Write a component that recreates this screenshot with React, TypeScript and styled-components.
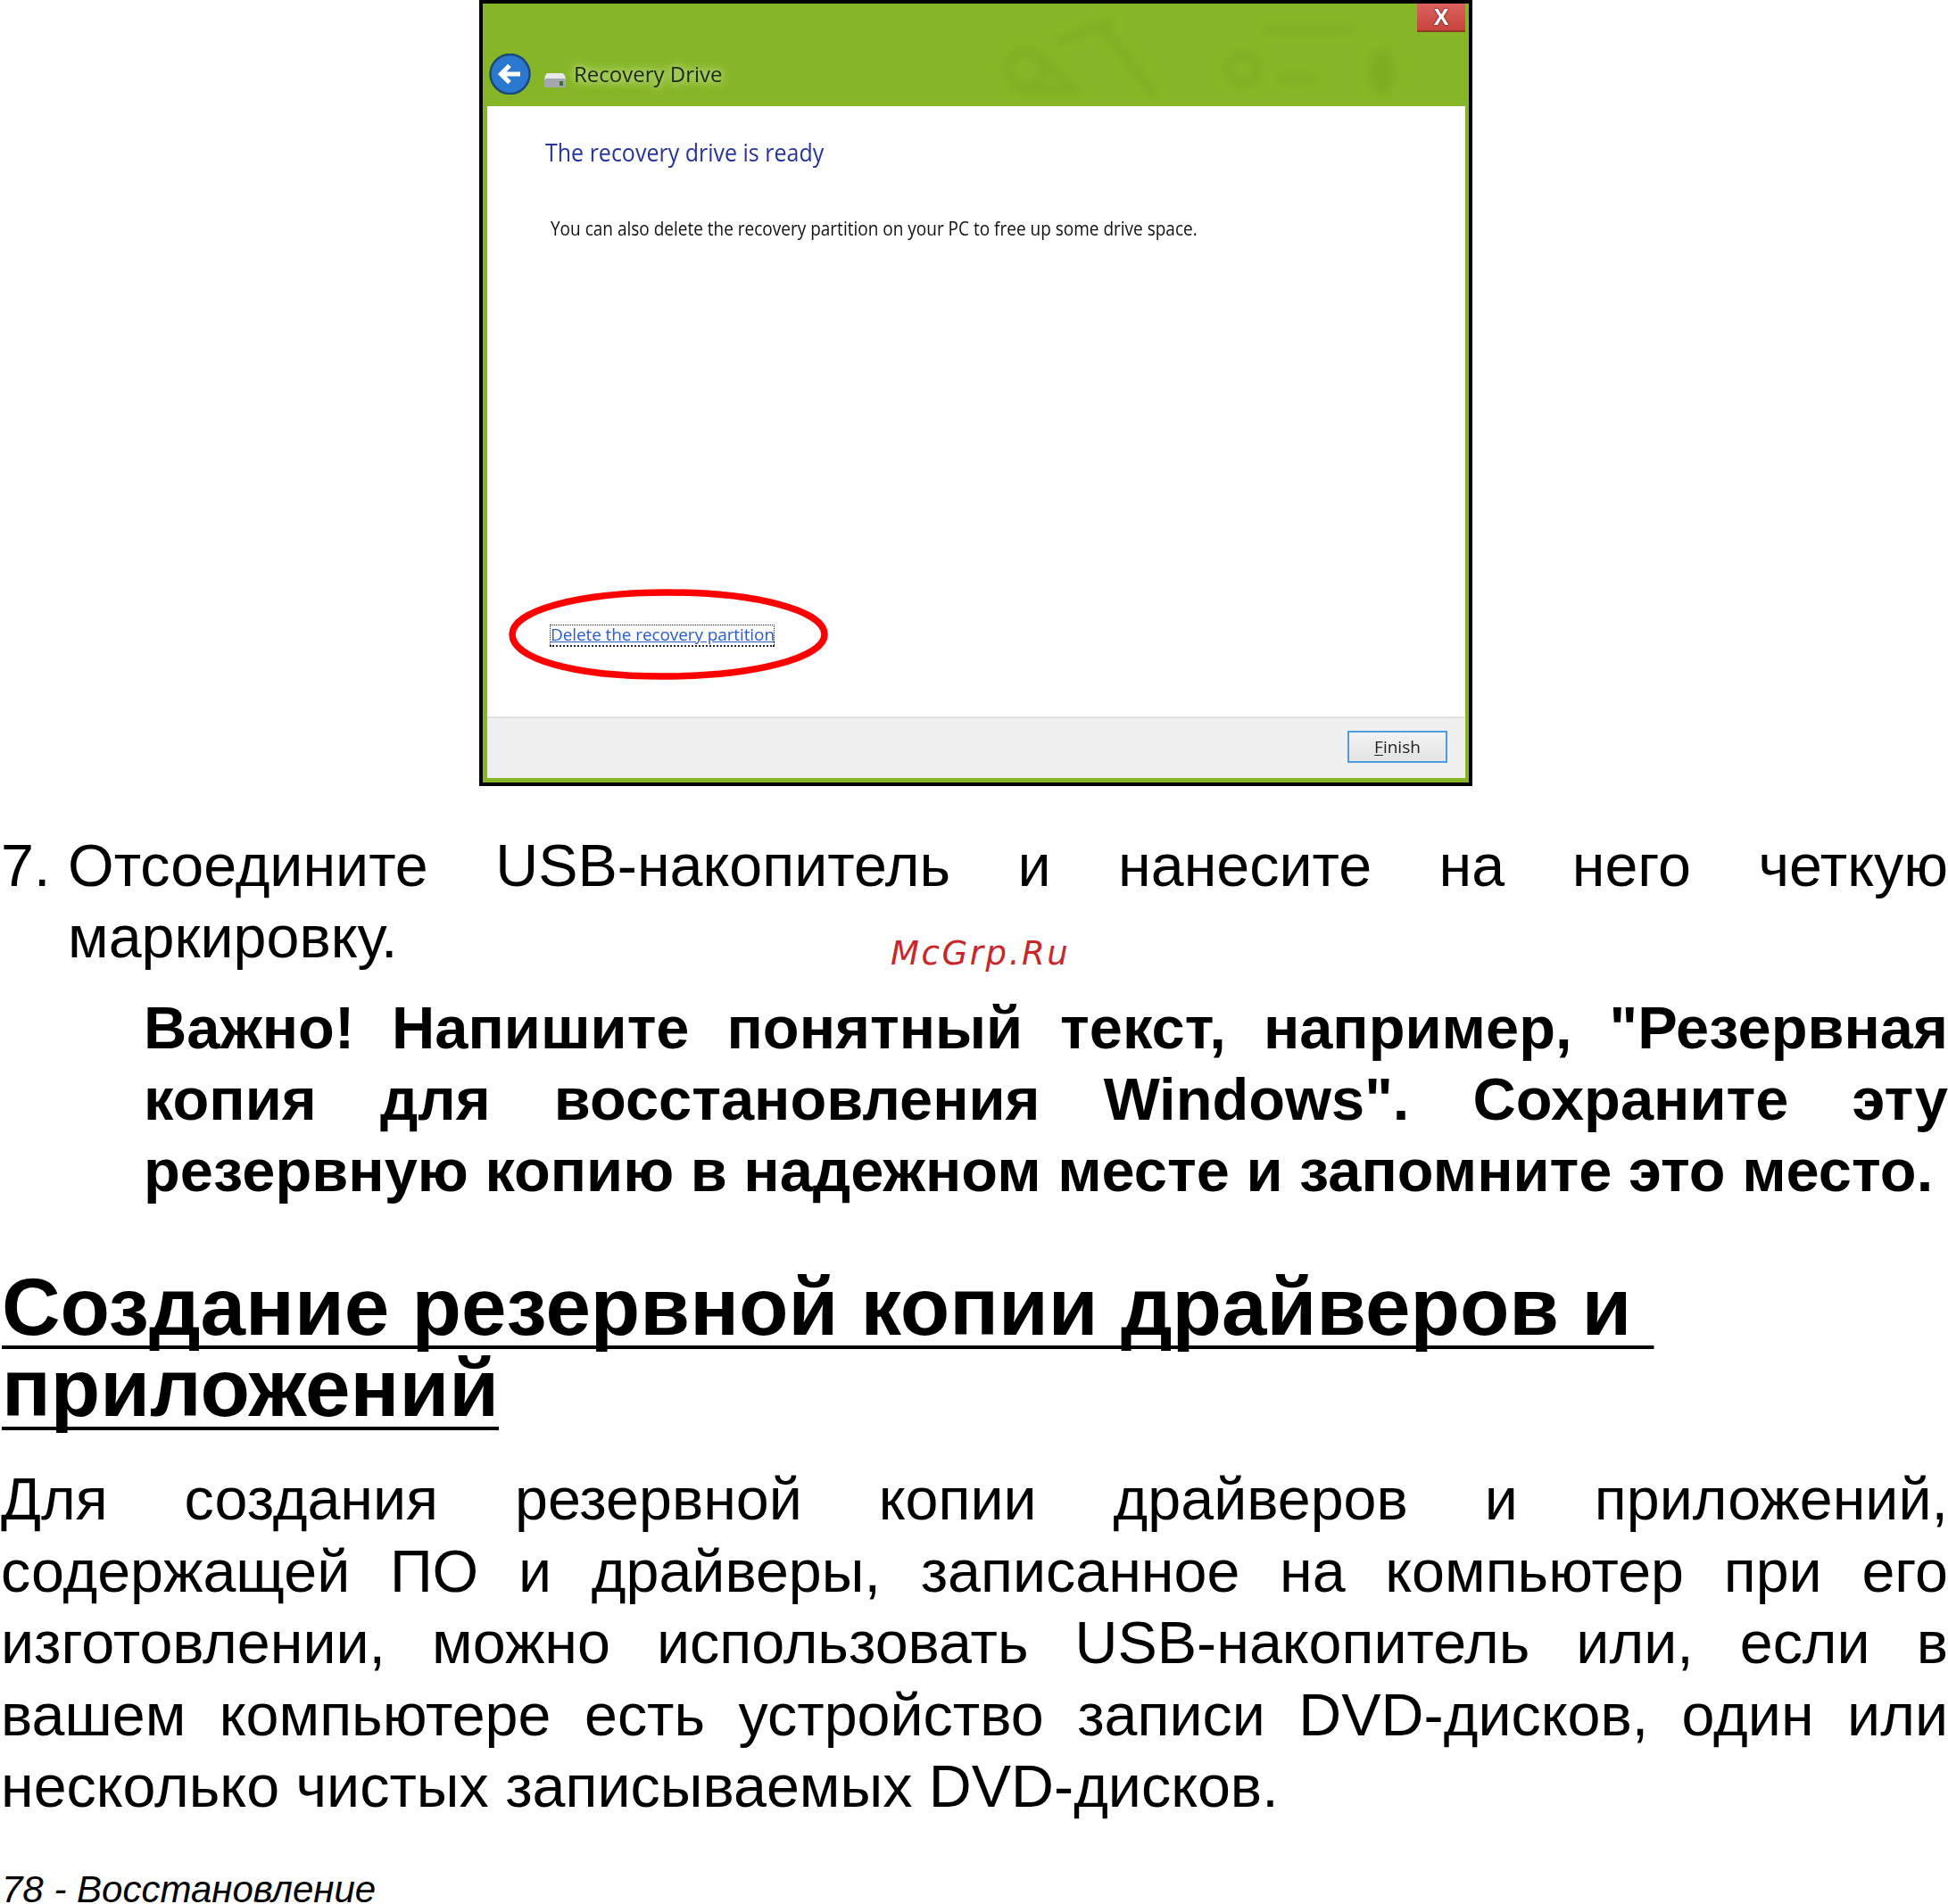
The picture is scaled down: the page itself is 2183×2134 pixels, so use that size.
import React from 'react';
import styled, { createGlobalStyle } from 'styled-components';

const GlobalStyle = createGlobalStyle`
  html, body {
    margin: 0;
    background: #fff;
  }
  body {
    font-family: "Liberation Sans", Arial, sans-serif;
    color: #000;
  }
`;

const Page = styled.div`
  position: relative;
  width: 2183px;
  height: 2134px;
  overflow: hidden;
`;

/* ---------- dialog screenshot ---------- */

const Dialog = styled.div`
  box-sizing: border-box;
  width: 1113px;
  height: 881px;
  margin-left: 537px;
  border: 4px solid #000;
  background: #86b627;
  padding: 0 4px 5px 5px;
  display: flex;
  flex-direction: column;
  font-family: "Open Sans", "Noto Sans", sans-serif;
`;

const TitleBar = styled.div`
  position: relative;
  height: 115px;
  flex: none;
  display: flex;
  flex-direction: column;
`;

const TitleArt = styled.svg`
  position: absolute;
  left: 580px;
  top: 0;
  width: 480px;
  height: 115px;
  filter: blur(4px);
  opacity: 0.55;
`;

const CloseRow = styled.div`
  position: relative;
  height: 32px;
  display: flex;
  justify-content: flex-end;
`;

const CloseButton = styled.div`
  width: 54px;
  height: 32px;
  background: linear-gradient(#dc6360, #c8433e);
  border-bottom: 2px solid #8e3a24;
  display: flex;
  align-items: center;
  justify-content: center;
  color: #fff;
  font: bold 25px "Liberation Sans", sans-serif;
  text-shadow: 0 0 2px #5a1f1f, 0 0 2px #5a1f1f;
  box-sizing: border-box;
`;

const NavRow = styled.div`
  position: relative;
  margin-top: 24px;
  margin-left: 2px;
  display: flex;
  align-items: center;
  height: 46px;
`;

const DriveIcon = styled.svg`
  margin-left: 14px;
  margin-top: 14px;
`;

const WindowTitle = styled.div`
  margin-left: 8px;
  font-size: 24px;
  line-height: 30px;
  color: #1c2b10;
  text-shadow: 0 0 8px rgba(225, 240, 190, 0.9), 0 0 14px rgba(225, 240, 190, 0.7);
  filter: blur(0.4px);
`;

const Body = styled.div`
  flex: 1;
  background: #fff;
  display: flex;
  flex-direction: column;
  padding-left: 65px;
`;

const Heading = styled.div`
  margin-top: 33px;
  font-size: 25px;
  line-height: 36px;
  color: #27349c;
  transform: scaleY(1.12);
  transform-origin: left center;
  filter: blur(0.4px);
`;

const Message = styled.div`
  margin-top: 55px;
  margin-left: 6px;
  font-size: 19px;
  line-height: 26px;
  color: #111;
  transform: scaleY(1.1);
  transform-origin: left center;
  filter: blur(0.3px);
`;

const LinkWrap = styled.div`
  position: relative;
  align-self: flex-start;
  margin-top: auto;
  margin-bottom: 78px;
  margin-left: 5px;
`;

const LinkText = styled.div`
  box-sizing: border-box;
  width: 252px;
  height: 25px;
  border: 1px dotted #223;
  border-bottom: 2px dotted #223;
  font-size: 19px;
  line-height: 20px;
  letter-spacing: -0.1px;
  white-space: nowrap;
  color: #2b5cc9;
  text-decoration: underline;
  filter: blur(0.3px);
`;

const Ring = styled.svg`
  position: absolute;
  left: -46px;
  top: -40px;
  width: 358px;
  height: 102px;
  overflow: visible;
`;

const DialogFooter = styled.div`
  flex: none;
  height: 69px;
  background: #efefef;
  border-top: 2px solid #e0e0e0;
  box-sizing: border-box;
  display: flex;
  align-items: center;
  justify-content: flex-end;
  padding: 0 20px 3px 0;
`;

const FinishButton = styled.div`
  box-sizing: border-box;
  width: 112px;
  height: 36px;
  border: 2px solid #4f9bdc;
  background: linear-gradient(#f2f2f2, #e3e3e3);
  color: #222;
  font-size: 19px;
  display: flex;
  align-items: center;
  justify-content: center;
  filter: blur(0.3px);
  u {
    text-underline-offset: 2px;
  }
`;

/* ---------- document text ---------- */

const TextLine = styled.div<{ $last?: boolean }>`
  white-space: nowrap;
  text-align: justify;
  text-align-last: ${p => (p.$last ? 'left' : 'justify')};
`;

const StepRow = styled.div`
  margin-top: 49px;
  display: flex;
  font-size: 66.4px;
  line-height: 80px;
`;

const StepNumber = styled.div`
  width: 76px;
  flex: none;
  padding-left: 1px;
  box-sizing: border-box;
`;

const StepText = styled.div`
  flex: 1;
`;

const Note = styled.div`
  margin-top: 22px;
  margin-left: 161px;
  font-size: 66.8px;
  line-height: 80px;
  font-weight: bold;
`;

const SectionTitle = styled.h2`
  margin: 67px 0 0 2px;
  font-size: 90.8px;
  line-height: 91px;
  font-weight: bold;
  white-space: pre;
  text-decoration: underline;
  text-decoration-thickness: 4px;
  text-underline-offset: 12px;
  text-decoration-skip-ink: none;
`;

const Paragraph = styled.div`
  margin-top: 39px;
  padding-left: 1px;
  font-size: 66.4px;
  line-height: 80.5px;
`;

const PageFooter = styled.div`
  margin-top: 51px;
  margin-left: 2px;
  font-size: 42px;
  line-height: 48px;
  font-style: italic;
`;

const Watermark = styled.div`
  position: absolute;
  left: 998px;
  top: 1047px;
  font-family: "DejaVu Sans", sans-serif;
  font-style: italic;
  font-size: 37px;
  line-height: 44px;
  letter-spacing: 2.6px;
  color: #c9262c;
`;

export default function App() {
  return (
    <Page>
      <GlobalStyle />
      <Dialog>
        <TitleBar>
          <TitleArt viewBox="0 0 480 115">
            <g fill="none" stroke="#76a81f" strokeWidth="7">
              <circle cx="23" cy="74" r="20" />
              <path d="M36 58 78 96H18" />
              <path d="M110 26l58 77" />
              <path d="M60 42l62-22" />
              <circle cx="267" cy="73" r="16" />
              <path d="M305 84h44" />
              <path d="M290 30h100" />
            </g>
            <ellipse cx="423" cy="76" rx="14" ry="26" fill="#76a81f" />
          </TitleArt>
          <CloseRow>
            <CloseButton>X</CloseButton>
          </CloseRow>
          <NavRow>
            <svg width="47" height="46" viewBox="0 0 47 46">
              <circle cx="23.5" cy="23" r="22" fill="#2a78d0" stroke="#1b4a7a" strokeWidth="2.5" />
              <path d="M35 23H14M23 13.5 13.5 23l9.5 9.5" fill="none" stroke="#fff" strokeWidth="5" />
            </svg>
            <DriveIcon width="26" height="18" viewBox="0 0 26 18">
              <path d="M5 1h16c2 0 3 2 4 7H1c1-5 2-7 4-7z" fill="#e6e8ea" />
              <rect x="1" y="7" width="24" height="10" rx="2" fill="#a4a8ac" />
              <rect x="18" y="10" width="4" height="5" fill="#3f6f2a" />
            </DriveIcon>
            <WindowTitle>Recovery Drive</WindowTitle>
          </NavRow>
        </TitleBar>
        <Body>
          <Heading>The recovery drive is ready</Heading>
          <Message>You can also delete the recovery partition on your PC to free up some drive space.</Message>
          <LinkWrap>
            <LinkText>Delete the recovery partition</LinkText>
            <Ring viewBox="0 0 358 102">
              <path
                d="M4 51C4 24 80 4 178 4s176 20 176 47-82 47-182 47S4 78 4 51z"
                fill="none"
                stroke="#f00"
                strokeWidth="7.5"
              />
            </Ring>
          </LinkWrap>
        </Body>
        <DialogFooter>
          <FinishButton>
            <span>
              <u>F</u>inish
            </span>
          </FinishButton>
        </DialogFooter>
      </Dialog>

      <StepRow>
        <StepNumber>7.</StepNumber>
        <StepText>
          <TextLine>Отсоедините USB-накопитель и нанесите на него четкую</TextLine>
          <TextLine $last>маркировку.</TextLine>
        </StepText>
      </StepRow>

      <Note>
        <TextLine>Важно! Напишите понятный текст, например, "Резервная</TextLine>
        <TextLine>копия для восстановления Windows". Сохраните эту</TextLine>
        <TextLine $last>резервную копию в надежном месте и запомните это место.</TextLine>
      </Note>

      <SectionTitle>
        {'Создание резервной копии драйверов и \nприложений'}
      </SectionTitle>

      <Paragraph>
        <TextLine>Для создания резервной копии драйверов и приложений,</TextLine>
        <TextLine>содержащей ПО и драйверы, записанное на компьютер при его</TextLine>
        <TextLine>изготовлении, можно использовать USB-накопитель или, если в</TextLine>
        <TextLine>вашем компьютере есть устройство записи DVD-дисков, один или</TextLine>
        <TextLine $last>несколько чистых записываемых DVD-дисков.</TextLine>
      </Paragraph>

      <PageFooter>78 - Восстановление</PageFooter>
      <Watermark>McGrp.Ru</Watermark>
    </Page>
  );
}
